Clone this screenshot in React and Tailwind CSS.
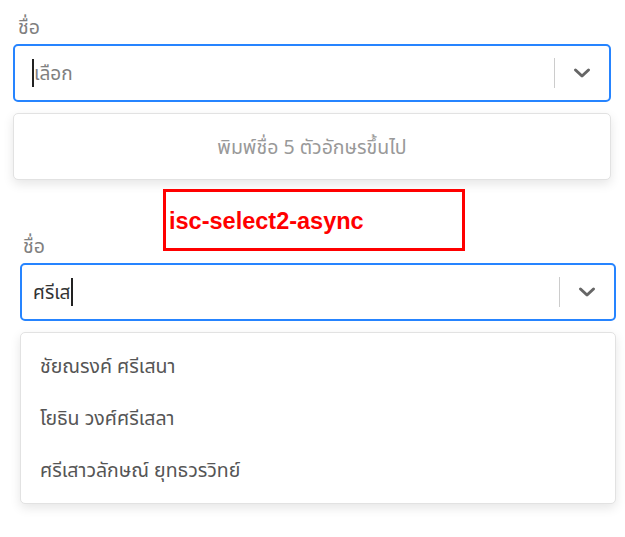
import { useState } from "react";

const FONT = { fontFamily: '"Noto Sans", "Noto Sans Thai", Roboto, sans-serif' };

function Chevron() {
  return (
    <svg width="20" height="20" viewBox="0 0 20 20" className="text-[#666]">
      <path d="M3.5 7 L10 13 L16.5 7" fill="none" stroke="currentColor" strokeWidth="3" strokeLinecap="round" strokeLinejoin="round" />
    </svg>
  );
}

function SelectBox({ value, placeholder }) {
  return (
    <div className="flex items-center h-[58px] border-2 border-[#2684ff] rounded-[5px] bg-white">
      <div className="flex-1 flex items-center pl-[17px] text-[19px]">
        {value ? (
          <>
            <span className="text-[#333] ml-[-6px]">{value}</span>
            <span className="w-[2px] h-[28px] bg-[#222]" />
          </>
        ) : (
          <>
            <span className="w-[2px] h-[28px] bg-[#222]" />
            <span className="text-[#808080]">{placeholder}</span>
          </>
        )}
      </div>
      <div className="w-px h-[30px] bg-[#ccc]" />
      <div className="w-[54px] flex items-center justify-center">
        <Chevron />
      </div>
    </div>
  );
}

export default function App() {
  const [options] = useState([
    "ชัยณรงค์ ศรีเสนา",
    "โยธิน วงศ์ศรีเสลา",
    "ศรีเสาวลักษณ์ ยุทธวรวิทย์",
  ]);

  return (
    <div className="relative w-[625px] h-[537px] bg-white overflow-hidden" style={FONT}>
      {/* first select: menu with hint */}
      <div className="ml-[13px] w-[598px] pt-[14px]">
        <div className="h-[26px] text-[19.5px] leading-[26px] text-[#808080] pl-[5px]">ชื่อ</div>
        <div className="mt-[4px]">
          <SelectBox placeholder="เลือก" />
        </div>
        <div className="mt-[11px] h-[67px] rounded-[5px] bg-white border border-[#e2e2e2] shadow-[0_4px_11px_rgba(0,0,0,0.1)] flex items-center justify-center text-[19.5px] text-[#999]">
          พิมพ์ชื่อ 5 ตัวอักษรขึ้นไป
        </div>
      </div>

      {/* second select: with results */}
      <div className="ml-[20px] w-[596px] mt-[53px]">
        <div className="h-[26px] text-[19.5px] leading-[26px] text-[#808080] pl-[3px]">ชื่อ</div>
        <div className="mt-[4px]">
          <SelectBox value="ศรีเส" />
        </div>
        <div className="mt-[11px] rounded-[5px] bg-white border border-[#e2e2e2] shadow-[0_4px_11px_rgba(0,0,0,0.1)] py-[7px]">
          {options.map((o) => (
            <div key={o} className="h-[52px] flex items-center pl-[19px] text-[19.5px] text-[#555]">
              {o}
            </div>
          ))}
        </div>
      </div>

      {/* annotation */}
      <div
        className="absolute left-[163px] top-[189px] w-[302px] h-[62px] border-[3px] border-[#ff0000] flex items-center pl-[3px] pt-[3px] text-[23.5px] font-bold text-[#ff0000]"
        style={{ fontFamily: '"Liberation Sans", Arial, sans-serif' }}
      >
        isc-select2-async
      </div>
    </div>
  );
}
